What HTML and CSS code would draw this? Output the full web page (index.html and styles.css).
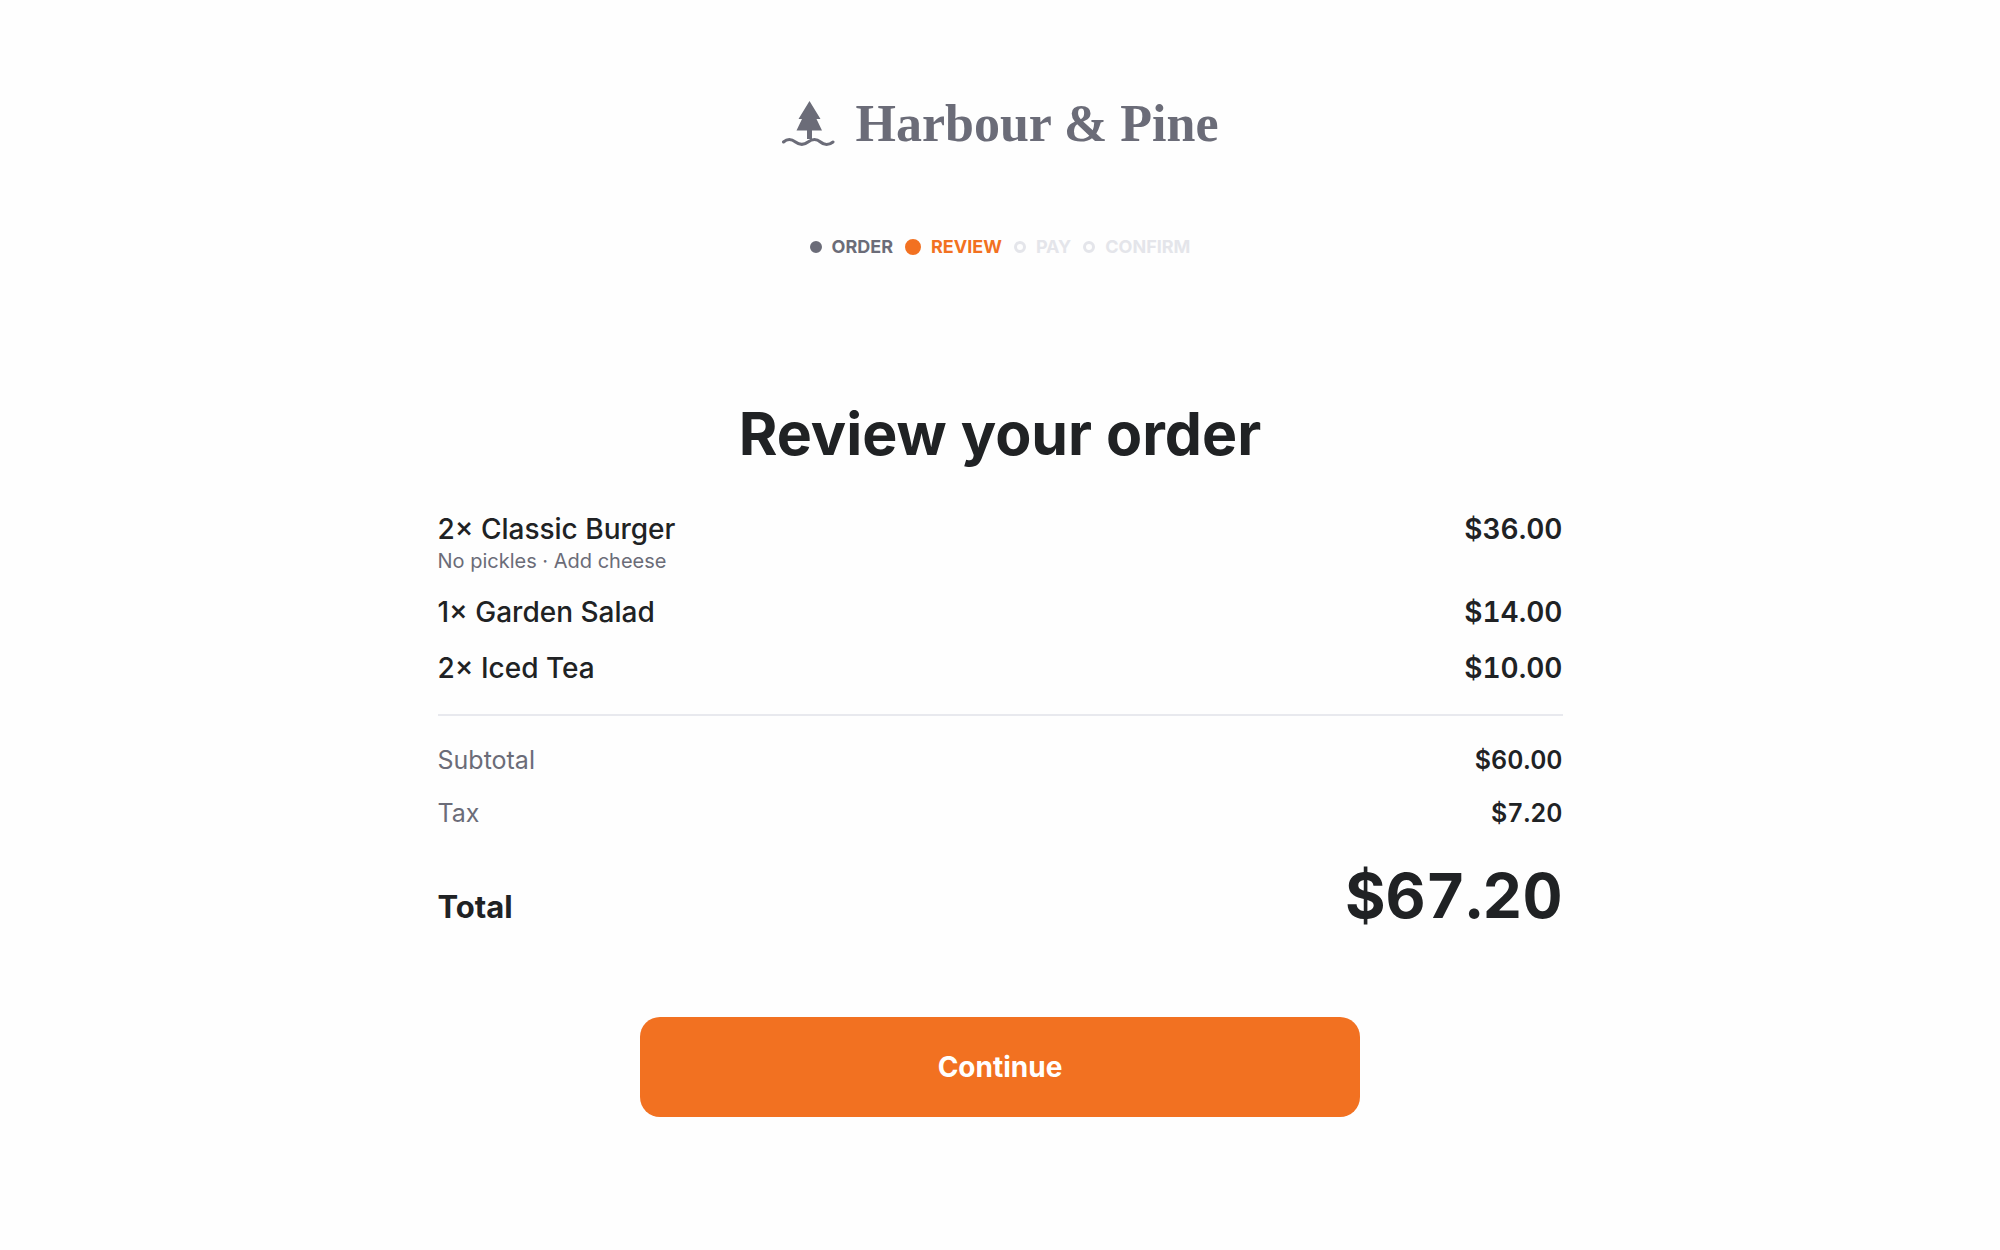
FILE: index.html
```html
<!DOCTYPE html>
<html lang="en">
<head>
    <meta charset="UTF-8">
    <meta name="viewport" content="width=device-width, initial-scale=1.0">
    <title>Review your order - Harbour &amp; Pine</title>
    <link rel="stylesheet" href="styles.css">
</head>
<body>
    <header class="brand">
        <svg class="brand-icon" viewBox="0 0 54 48" aria-hidden="true">
            <path class="tree" d="M28.500 1L39.500 19H35.500L41 30.500H31V39H26V30.500H15.500L21 19H17.500Z"/>
            <path class="wave" d="M2.500 42C6.500 38.500 10.500 39 14.500 42S22.500 45.500 27 42S35.500 38.500 39.500 42S47.500 45.500 52 42"/>
        </svg>
        <span class="brand-name">Harbour &amp; Pine</span>
    </header>

    <ol class="steps">
        <li class="step done"><span class="dot"></span>ORDER</li>
        <li class="step active" aria-current="step"><span class="dot"></span>REVIEW</li>
        <li class="step"><span class="dot"></span>PAY</li>
        <li class="step"><span class="dot"></span>CONFIRM</li>
    </ol>

    <main class="review">
        <h1>Review your order</h1>
        <ul class="items">
            <li class="row">
                <div>
                    <div class="item-name">2× Classic Burger</div>
                    <div class="item-note">No pickles · Add cheese</div>
                </div>
                <span class="price">$36.00</span>
            </li>
            <li class="row">
                <div class="item-name">1× Garden Salad</div>
                <span class="price">$14.00</span>
            </li>
            <li class="row">
                <div class="item-name">2× Iced Tea</div>
                <span class="price">$10.00</span>
            </li>
        </ul>
        <dl class="totals">
            <div class="row">
                <dt>Subtotal</dt>
                <dd>$60.00</dd>
            </div>
            <div class="row">
                <dt>Tax</dt>
                <dd>$7.20</dd>
            </div>
            <div class="row total">
                <dt>Total</dt>
                <dd>$67.20</dd>
            </div>
        </dl>
        <button type="button" class="continue-btn">Continue</button>
    </main>
</body>
</html>
```
FILE: styles.css
```css
* {
    box-sizing: border-box;
}
body {
    margin: 0;
    padding: 92px 40px;
    background-color: #fefefe;
    color: #202224;
    font-family: Inter, sans-serif;
    display: flex;
    flex-direction: column;
    align-items: center;
}
.brand {
    display: flex;
    align-items: center;
    gap: 20px;
    color: #6b6c78;
}
.brand-icon {
    width: 54px;
    height: 48px;
}
.tree {
    fill: currentColor;
}
.wave {
    fill: none;
    stroke: currentColor;
    stroke-width: 3;
    stroke-linecap: round;
}
.brand-name {
    font-family: "Liberation Serif", serif;
    font-size: 52px;
    line-height: 64px;
    font-weight: bold;
}
.steps {
    display: flex;
    align-items: center;
    gap: 12px;
    list-style: none;
    margin: 80px 0 0;
    padding: 0;
}
.step {
    display: flex;
    align-items: center;
    gap: 10px;
    font-size: 18px;
    line-height: 22px;
    font-weight: 700;
    color: #e4e5ea;
}
.dot {
    width: 12px;
    height: 12px;
    border: 3px solid currentColor;
    border-radius: 50%;
}
.done {
    color: #6b6c78;
}
.active {
    color: #f27121;
}
.done .dot {
    background-color: currentColor;
}
.active .dot {
    width: 16px;
    height: 16px;
    background-color: currentColor;
}
.review {
    width: 100%;
    max-width: 1125px;
    margin-top: 140px;
    display: flex;
    flex-direction: column;
}
h1 {
    margin: 0 0 42px;
    font-size: 59px;
    line-height: 72px;
    font-weight: 700;
    text-align: center;
}
.items {
    display: flex;
    flex-direction: column;
    gap: 22px;
    list-style: none;
    margin: 0;
    padding: 0 0 29px;
    border-bottom: 2px solid #e8e9ee;
}
.row {
    display: flex;
    justify-content: space-between;
}
.item-name, .price {
    font-size: 28px;
    line-height: 34px;
    font-weight: 500;
}
.item-note {
    margin-top: 3px;
    font-size: 20px;
    line-height: 24px;
    color: #6b6c78;
}
.price {
    font-weight: 600;
    font-variant-numeric: tabular-nums;
}
.totals {
    display: flex;
    flex-direction: column;
    gap: 21px;
    margin: 28px 0 83px;
    font-size: 25px;
    line-height: 32px;
}
.totals dt {
    color: #6b6c78;
}
.totals dd {
    margin: 0;
    font-weight: 600;
    font-variant-numeric: tabular-nums;
}
.totals .total {
    align-items: baseline;
    margin-top: 8px;
}
.total dt {
    color: #202224;
    font-size: 31px;
    font-weight: 700;
}
.total dd {
    font-size: 62px;
    line-height: 76px;
    font-weight: 700;
}
.continue-btn {
    align-self: center;
    width: 64%;
    padding: 33px;
    border: none;
    border-radius: 20px;
    background-color: #f27121;
    color: white;
    font-family: inherit;
    font-size: 28px;
    line-height: 34px;
    font-weight: 700;
    cursor: pointer;
}
```
